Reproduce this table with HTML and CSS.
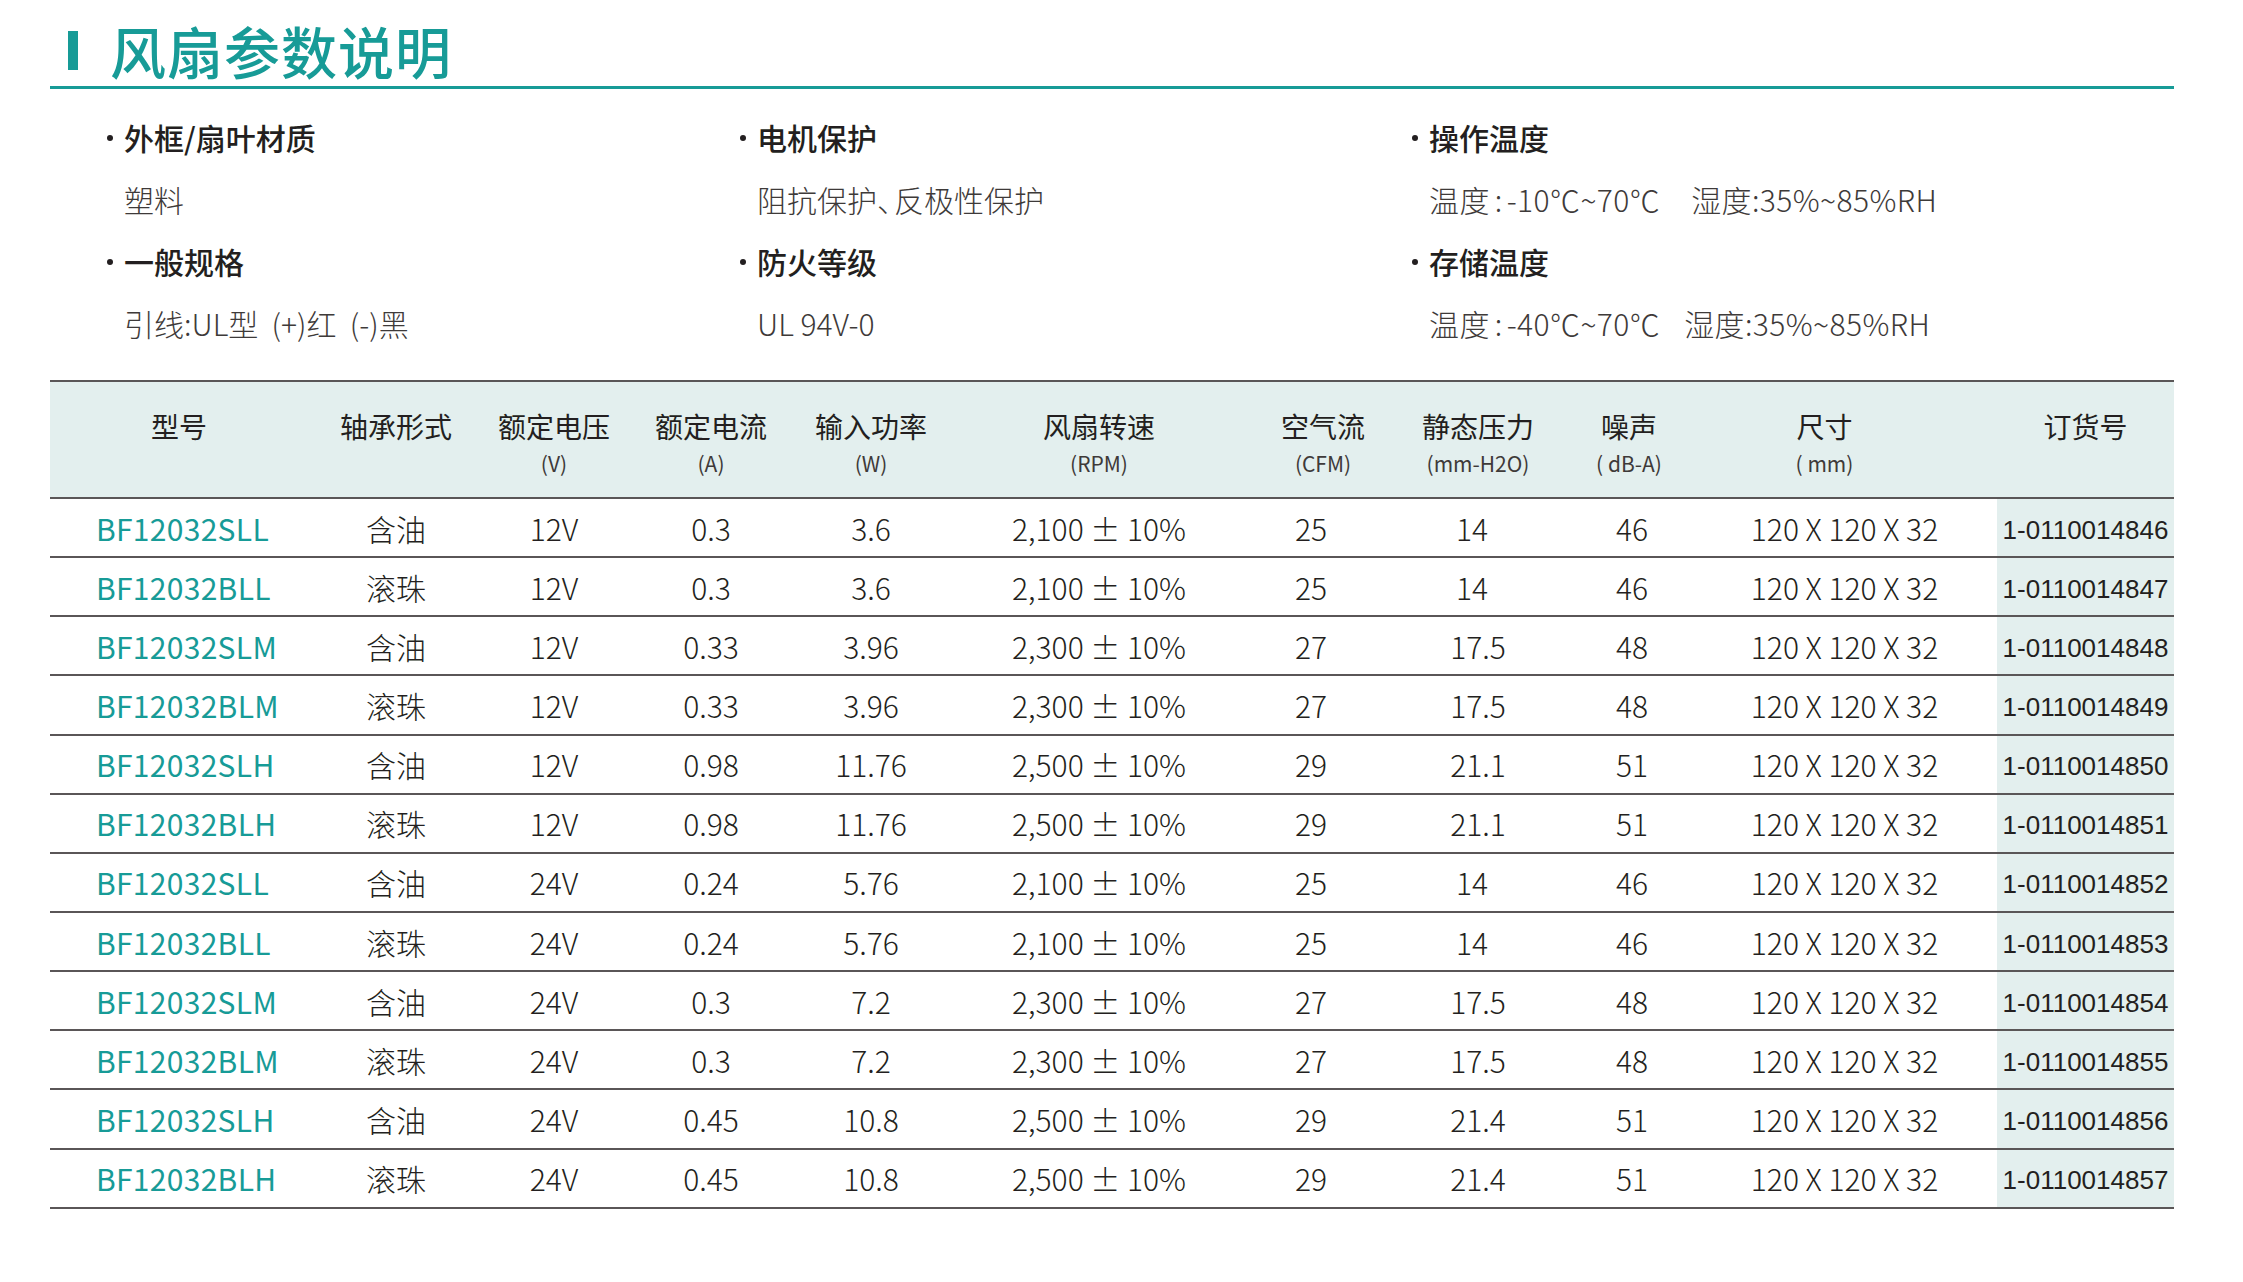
FILE: index.html
```html
<!DOCTYPE html>
<html lang="zh-CN">
<head>
<meta charset="utf-8">
<title>风扇参数说明</title>
<link rel="stylesheet" href="styles.css">
</head>
<body>
<div class="page">
  <header class="title">
    <span class="title-bar"></span>
    <h1>风扇参数说明</h1>
  </header>

  <section class="specs">
    <div class="spec">
      <div class="spec-name">外框/扇叶材质</div>
      <div class="spec-value">塑料</div>
      <div class="spec-name">一般规格</div>
      <div class="spec-value">引线:UL型&nbsp;&nbsp;(+)红&nbsp;&nbsp;(-)黑</div>
    </div>
    <div class="spec">
      <div class="spec-name">电机保护</div>
      <div class="spec-value">阻抗保护<span class="punct">、</span>反极性保护</div>
      <div class="spec-name">防火等级</div>
      <div class="spec-value">UL 94V-0</div>
    </div>
    <div class="spec">
      <div class="spec-name">操作温度</div>
      <div class="spec-value temp">温度<span class="colon">:</span>-10℃~70℃<span class="gap1">湿度:35%~85%RH</span></div>
      <div class="spec-name">存储温度</div>
      <div class="spec-value temp">温度<span class="colon">:</span>-40℃~70℃<span class="gap2">湿度:35%~85%RH</span></div>
    </div>
  </section>

  <section class="table">
    <div class="row head">
      <div class="cell"><span class="h">型号</span></div>
      <div class="cell"><span class="h">轴承形式</span></div>
      <div class="cell"><span class="h">额定电压</span><span class="u">(V)</span></div>
      <div class="cell"><span class="h">额定电流</span><span class="u">(A)</span></div>
      <div class="cell"><span class="h">输入功率</span><span class="u">(W)</span></div>
      <div class="cell"><span class="h">风扇转速</span><span class="u">(RPM)</span></div>
      <div class="cell shift-right"><span class="h">空气流</span><span class="u">(CFM)</span></div>
      <div class="cell"><span class="h">静态压力</span><span class="u">(mm-H2O)</span></div>
      <div class="cell shift-left-sm"><span class="h">噪声</span><span class="u">(&nbsp;dB-A)</span></div>
      <div class="cell shift-left"><span class="h">尺寸</span><span class="u">(&nbsp;mm)</span></div>
      <div class="cell order"><span class="h">订货号</span></div>
    </div>

    <div class="row"><div class="cell model">BF12032SLL</div><div class="cell">含油</div><div class="cell">12V</div><div class="cell">0.3</div><div class="cell">3.6</div><div class="cell">2,100 ± 10%</div><div class="cell c7">25</div><div class="cell c8">14</div><div class="cell">46</div><div class="cell c10">120 X 120 X 32</div><div class="cell order">1-0110014846</div></div>
    <div class="row"><div class="cell model">BF12032BLL</div><div class="cell">滚珠</div><div class="cell">12V</div><div class="cell">0.3</div><div class="cell">3.6</div><div class="cell">2,100 ± 10%</div><div class="cell c7">25</div><div class="cell c8">14</div><div class="cell">46</div><div class="cell c10">120 X 120 X 32</div><div class="cell order">1-0110014847</div></div>
    <div class="row"><div class="cell model">BF12032SLM</div><div class="cell">含油</div><div class="cell">12V</div><div class="cell">0.33</div><div class="cell">3.96</div><div class="cell">2,300 ± 10%</div><div class="cell c7">27</div><div class="cell">17.5</div><div class="cell">48</div><div class="cell c10">120 X 120 X 32</div><div class="cell order">1-0110014848</div></div>
    <div class="row"><div class="cell model">BF12032BLM</div><div class="cell">滚珠</div><div class="cell">12V</div><div class="cell">0.33</div><div class="cell">3.96</div><div class="cell">2,300 ± 10%</div><div class="cell c7">27</div><div class="cell">17.5</div><div class="cell">48</div><div class="cell c10">120 X 120 X 32</div><div class="cell order">1-0110014849</div></div>
    <div class="row"><div class="cell model">BF12032SLH</div><div class="cell">含油</div><div class="cell">12V</div><div class="cell">0.98</div><div class="cell">11.76</div><div class="cell">2,500 ± 10%</div><div class="cell c7">29</div><div class="cell">21.1</div><div class="cell">51</div><div class="cell c10">120 X 120 X 32</div><div class="cell order">1-0110014850</div></div>
    <div class="row"><div class="cell model">BF12032BLH</div><div class="cell">滚珠</div><div class="cell">12V</div><div class="cell">0.98</div><div class="cell">11.76</div><div class="cell">2,500 ± 10%</div><div class="cell c7">29</div><div class="cell">21.1</div><div class="cell">51</div><div class="cell c10">120 X 120 X 32</div><div class="cell order">1-0110014851</div></div>
    <div class="row"><div class="cell model">BF12032SLL</div><div class="cell">含油</div><div class="cell">24V</div><div class="cell">0.24</div><div class="cell">5.76</div><div class="cell">2,100 ± 10%</div><div class="cell c7">25</div><div class="cell c8">14</div><div class="cell">46</div><div class="cell c10">120 X 120 X 32</div><div class="cell order">1-0110014852</div></div>
    <div class="row"><div class="cell model">BF12032BLL</div><div class="cell">滚珠</div><div class="cell">24V</div><div class="cell">0.24</div><div class="cell">5.76</div><div class="cell">2,100 ± 10%</div><div class="cell c7">25</div><div class="cell c8">14</div><div class="cell">46</div><div class="cell c10">120 X 120 X 32</div><div class="cell order">1-0110014853</div></div>
    <div class="row"><div class="cell model">BF12032SLM</div><div class="cell">含油</div><div class="cell">24V</div><div class="cell">0.3</div><div class="cell">7.2</div><div class="cell">2,300 ± 10%</div><div class="cell c7">27</div><div class="cell">17.5</div><div class="cell">48</div><div class="cell c10">120 X 120 X 32</div><div class="cell order">1-0110014854</div></div>
    <div class="row"><div class="cell model">BF12032BLM</div><div class="cell">滚珠</div><div class="cell">24V</div><div class="cell">0.3</div><div class="cell">7.2</div><div class="cell">2,300 ± 10%</div><div class="cell c7">27</div><div class="cell">17.5</div><div class="cell">48</div><div class="cell c10">120 X 120 X 32</div><div class="cell order">1-0110014855</div></div>
    <div class="row"><div class="cell model">BF12032SLH</div><div class="cell">含油</div><div class="cell">24V</div><div class="cell">0.45</div><div class="cell">10.8</div><div class="cell">2,500 ± 10%</div><div class="cell c7">29</div><div class="cell">21.4</div><div class="cell">51</div><div class="cell c10">120 X 120 X 32</div><div class="cell order">1-0110014856</div></div>
    <div class="row"><div class="cell model">BF12032BLH</div><div class="cell">滚珠</div><div class="cell">24V</div><div class="cell">0.45</div><div class="cell">10.8</div><div class="cell">2,500 ± 10%</div><div class="cell c7">29</div><div class="cell">21.4</div><div class="cell">51</div><div class="cell c10">120 X 120 X 32</div><div class="cell order">1-0110014857</div></div>
  </section>
</div>
</body>
</html>
```

FILE: styles.css
```css
* { box-sizing: border-box; }

html, body {
  margin: 0;
  padding: 0;
  background: #ffffff;
}

body {
  font-family: "Noto Sans CJK SC", "Noto Sans", sans-serif;
  color: #231f20;
}

.page {
  width: 2243px;
  padding: 0 69px 0 50px;
}

/* ---------- title ---------- */
.title {
  display: flex;
  align-items: center;
  height: 89px;
  padding: 14px 0 0 18px;
  border-bottom: 3px solid #179b97;
}

.title-bar {
  width: 10px;
  height: 39px;
  background: #179b97;
  margin-right: 32px;
}

.title h1 {
  margin: 0;
  font-size: 56px;
  line-height: 60px;
  font-weight: 500;
  color: #179b97;
  letter-spacing: 1px;
}

/* ---------- specs ---------- */
.specs {
  display: grid;
  grid-template-columns: 633px 672px 1fr;
  padding: 17px 0 0 57px;
}

.spec-name,
.spec-value {
  height: 62px;
  line-height: 62px;
  font-size: 30px;
  white-space: nowrap;
}

.spec-name {
  font-weight: 500;
  color: #231f20;
  position: relative;
  padding-left: 17px;
}

.spec-name::before {
  content: "";
  position: absolute;
  left: 0;
  top: 29px;
  width: 6px;
  height: 6px;
  border-radius: 50%;
  background: #231f20;
}

.spec-value {
  font-weight: 300;
  color: #3e3a39;
  padding-left: 17px;
}

.punct {
  letter-spacing: -13px;
}

.temp {
  letter-spacing: 0.4px;
}

.colon {
  margin: 0 4px 0 5px;
}

.gap1 { margin-left: 31px; }
.gap2 { margin-left: 24px; }

/* ---------- table ---------- */
.table {
  margin-top: 26px;
  border-top: 2px solid #5a5657;
}

.row {
  display: grid;
  grid-template-columns: 258px 176px 140px 174px 146px 310px 124px 200px 108px 311px 177px;
  height: 59.15px;
  border-bottom: 2px solid #5a5657;
}

.row.head {
  height: 117px;
  background: #e3efee;
}

.cell {
  display: flex;
  align-items: center;
  justify-content: center;
  font-size: 30px;
  font-weight: 300;
  color: #231f20;
  white-space: nowrap;
}

.head .cell {
  flex-direction: column;
  justify-content: flex-start;
  padding-top: 25px;
}

.head .h {
  font-size: 28px;
  line-height: 38px;
  font-weight: 400;
}

.head .u {
  font-size: 21px;
  line-height: 32px;
  font-weight: 400;
  color: #3e3a39;
  margin-top: 2px;
}

.head .cell.shift-right { padding-left: 14px; }
.head .cell.shift-left { padding-right: 34px; }
.head .cell.shift-left-sm { padding-right: 6px; }

.cell.c7 { padding-right: 10px; }
.cell.c8 { padding-right: 12px; }
.cell.c10 { padding-left: 6px; }

.cell.model {
  justify-content: flex-start;
  padding-left: 46px;
  color: #179b97;
  font-weight: 400;
  letter-spacing: 0.3px;
}

.cell.order {
  background: #e3efee;
  font-family: "Liberation Sans", Arial, sans-serif;
  font-size: 26px;
  font-weight: 400;
  padding-top: 5px;
}

.head .cell.order {
  background: transparent;
  font-family: "Noto Sans CJK SC", sans-serif;
  padding-top: 25px;
}
```
